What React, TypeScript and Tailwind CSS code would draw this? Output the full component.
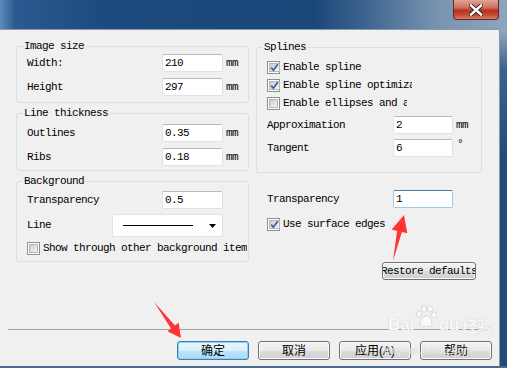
import React from 'react';

const mono = "font-['Liberation_Mono',monospace] text-[11px] tracking-[-0.6px] text-black whitespace-nowrap";
const cjk = "font-['Liberation_Sans','Noto_Sans_CJK_SC',sans-serif] text-[12px] text-black";

function Check({ on }: { on?: boolean }) {
  return (
    <span className="w-[13px] h-[13px] shrink-0 border border-[#8e8f8f] bg-white p-[1px] flex">
      <span className="flex-1 border border-[#b3b7bd] bg-[linear-gradient(135deg,#c9cdd3,#f4f4f4)] flex items-center justify-center">
        {on && (
          <svg width="9" height="9" viewBox="0 0 9 9">
            <path d="M1.2 4.6 L3.4 7.2 L7.8 1.3" fill="none" stroke="#3d5a9c" strokeWidth="1.7" />
          </svg>
        )}
      </span>
    </span>
  );
}

function Field({ value, focus, w }: { value: string; focus?: boolean; w: string }) {
  return (
    <div
      className={`${w} h-[18px] shrink-0 bg-white border rounded-[2px] pl-[2px] flex items-center ${mono} ${
        focus ? 'border-[#a4c9e3] border-t-[#3d7bad]' : 'border-[#dfe3e8] border-t-[#b8bcc2]'
      }`}
    >
      {value}
    </div>
  );
}

function Group({ title, className, children }: { title: string; className: string; children: React.ReactNode }) {
  return (
    <div className={`relative border border-[#d5dfe5] rounded-[3px] ${className}`}>
      <span className={`absolute -top-[7px] left-[6px] px-[1px] bg-[#f0f0f0] leading-[12px] ${mono}`}>{title}</span>
      {children}
    </div>
  );
}

function WinButton({ label, primary }: { label: string; primary?: boolean }) {
  return (
    <button
      className={`w-[72px] h-[19px] rounded-[3px] border flex items-center justify-center leading-none ${cjk} ${
        primary
          ? 'border-[#3c7fb1] bg-[linear-gradient(to_bottom,#eaf6fd_0%,#d9f0fc_50%,#bee6fd_50%,#a7d9f5_100%)] shadow-[inset_0_0_0_1px_#8fd0f3]'
          : 'border-[#707070] bg-[linear-gradient(to_bottom,#f2f2f2_0%,#ebebeb_50%,#dddddd_50%,#cfcfcf_100%)] shadow-[inset_0_0_0_1px_#fcfcfc]'
      }`}
    >
      {label}
    </button>
  );
}

export default function App() {
  return (
    <div className="w-[507px] h-[368px] relative overflow-hidden flex flex-col bg-[#f0f0f0]">
      {/* Title bar */}
      <div className="h-[29px] shrink-0 relative bg-[linear-gradient(to_right,#5d8cbc_0%,#2a5a8f_3%,#1c4b7f_20%,#1b4779_62%,#3d6490_72%,#7893b0_86%,#8ea4bc_100%)]">
        <div className="absolute top-0 left-[453px] w-[46px] h-[20px] rounded-b-[4px] border border-t-0 border-[#5a2a24] bg-[linear-gradient(to_bottom,#e3a393_0%,#d0705c_40%,#b8331f_55%,#c94a32_80%,#de8068_100%)] flex items-center justify-center">
          <svg width="14" height="12" viewBox="0 0 14 12">
            <path d="M2 1.5 L12 10.5 M12 1.5 L2 10.5" stroke="#3b2420" strokeWidth="4.4" strokeLinecap="square" />
            <path d="M2 1.5 L12 10.5 M12 1.5 L2 10.5" stroke="#ffffff" strokeWidth="2.4" strokeLinecap="square" />
          </svg>
        </div>
      </div>

      <div className="flex flex-1 min-h-0">
        {/* Client */}
        <div className="flex-1 flex flex-col border-t border-r border-[#8799ad]">
          <div className="flex pl-[16px] gap-[7px]">
            {/* Left column */}
            <div className="w-[233px] flex flex-col">
              <Group title="Image size" className="mt-[16px] pt-[7px] pb-[6px] pl-[10px]">
                <div className="flex items-center h-[18px]">
                  <span className={`w-[135px] ${mono}`}>Width:</span>
                  <Field value="210" w="w-[61px]" />
                  <span className={`ml-[3px] ${mono}`}>mm</span>
                </div>
                <div className="flex items-center h-[18px] mt-[6px]">
                  <span className={`w-[135px] ${mono}`}>Height</span>
                  <Field value="297" w="w-[61px]" />
                  <span className={`ml-[3px] ${mono}`}>mm</span>
                </div>
              </Group>

              <Group title="Line thickness" className="mt-[10px] pt-[10px] pb-[4px] pl-[10px]">
                <div className="flex items-center h-[18px]">
                  <span className={`w-[135px] ${mono}`}>Outlines</span>
                  <Field value="0.35" w="w-[61px]" />
                  <span className={`ml-[3px] ${mono}`}>mm</span>
                </div>
                <div className="flex items-center h-[18px] mt-[6px]">
                  <span className={`w-[135px] ${mono}`}>Ribs</span>
                  <Field value="0.18" w="w-[61px]" />
                  <span className={`ml-[3px] ${mono}`}>mm</span>
                </div>
              </Group>

              <Group title="Background" className="mt-[10px] pt-[9px] pb-[6px] pl-[10px]">
                <div className="flex items-center h-[18px]">
                  <span className={`w-[135px] ${mono}`}>Transparency</span>
                  <Field value="0.5" w="w-[61px]" />
                </div>
                <div className="flex items-center h-[23px] mt-[5px]">
                  <span className={`w-[85px] ${mono}`}>Line</span>
                  <div className="w-[111px] h-[23px] bg-white border border-[#dfe3e8] rounded-[2px] flex items-center pl-[10px]">
                    <span className="w-[70px] h-[1px] bg-black" />
                    <svg className="ml-[16px]" width="7" height="4" viewBox="0 0 7 4">
                      <path d="M0 0 H7 L3.5 4 Z" fill="#000" />
                    </svg>
                  </div>
                </div>
                <div className="flex items-center h-[13px] mt-[5px]">
                  <Check />
                  <span className={`ml-[3px] w-[204px] overflow-hidden ${mono}`}>Show through other background items</span>
                </div>
              </Group>
            </div>

            {/* Right column */}
            <div className="w-[226px] flex flex-col">
              <Group title="Splines" className="mt-[17px] pt-[13px] pb-[15px] pl-[10px]">
                <div className="flex items-center h-[13px]">
                  <Check on />
                  <span className={`ml-[3px] ${mono}`}>Enable spline</span>
                </div>
                <div className="flex items-center h-[13px] mt-[5px]">
                  <Check on />
                  <span className={`ml-[3px] w-[129px] overflow-hidden ${mono}`}>Enable spline optimization</span>
                </div>
                <div className="flex items-center h-[13px] mt-[5px]">
                  <Check />
                  <span className={`ml-[3px] w-[124px] overflow-hidden ${mono}`}>Enable ellipses and arcs</span>
                </div>
                <div className="flex items-center h-[18px] mt-[6px]">
                  <span className={`w-[126px] ${mono}`}>Approximation</span>
                  <Field value="2" w="w-[60px]" />
                  <span className={`ml-[3px] ${mono}`}>mm</span>
                </div>
                <div className="flex items-center h-[18px] mt-[5px]">
                  <span className={`w-[126px] ${mono}`}>Tangent</span>
                  <Field value="6" w="w-[60px]" />
                  <span className={`ml-[4px] self-start -mt-[3px] ${mono}`}>°</span>
                </div>
              </Group>

              <div className="flex items-center h-[18px] mt-[17px] pl-[11px]">
                <span className={`w-[126px] ${mono}`}>Transparency</span>
                <Field value="1" focus w="w-[60px]" />
              </div>
              <div className="flex items-center h-[13px] mt-[10px] pl-[11px]">
                <Check on />
                <span className={`ml-[3px] ${mono}`}>Use surface edges</span>
              </div>
              <button className="ml-[126px] mt-[31px] w-[94px] h-[18px] rounded-[3px] border border-[#707070] bg-[linear-gradient(to_bottom,#f2f2f2_0%,#ebebeb_50%,#dddddd_50%,#cfcfcf_100%)] shadow-[inset_0_0_0_1px_#fcfcfc] flex items-center justify-center overflow-hidden">
                <span className={`shrink-0 ${mono}`}>Restore defaults</span>
              </button>
            </div>
          </div>

          {/* Footer */}
          <div className="mt-auto pb-[6px]">
            <div className="ml-[8px] w-[481px] h-[1px] bg-[#a0a0a0]" />
            <div className="flex gap-[9px] pl-[177px] mt-[11px]">
              <WinButton label="确定" primary />
              <WinButton label="取消" />
              <WinButton label="应用(A)" />
              <WinButton label="帮助" />
            </div>
          </div>
        </div>

        {/* Right window frame */}
        <div className="w-[7px] shrink-0 bg-[linear-gradient(to_bottom,#93a8c0_0%,#3b6290_12%,#21497a_40%,#234c7a_100%)]" />
      </div>
      <div className="h-[2px] shrink-0 bg-[#4b6c92]" />

      {/* Watermark */}
      <div className="absolute left-[388px] top-[305px] pointer-events-none flex items-end gap-[1px] text-[#f9f9f9] [text-shadow:0_0_1px_#b8b8b8]">
        <span className="font-['Liberation_Sans',sans-serif] font-bold text-[17px] leading-none">Bai</span>
        <svg width="22" height="24" viewBox="0 0 22 24" className="mb-[4px]">
          <g fill="#f9f9f9" stroke="#c2c2c2" strokeWidth="0.6">
            <ellipse cx="4" cy="9" rx="2.5" ry="3.2" />
            <ellipse cx="9" cy="4" rx="2.5" ry="3.2" />
            <ellipse cx="15" cy="4" rx="2.5" ry="3.2" />
            <ellipse cx="19" cy="10" rx="2.5" ry="3.2" />
            <path d="M5 19 C6 13 9 11 11 11 C14 11 17 14 17 19 C17 22 13 22 11 21 C9 22 5 22 5 19 Z" />
          </g>
        </svg>
        <span className="font-['Liberation_Sans',sans-serif] font-bold text-[17px] leading-none">du</span>
        <span className="font-['Noto_Sans_CJK_SC',sans-serif] font-bold text-[15px] leading-none ml-[2px]">经验</span>
      </div>
      <div className="absolute left-[384px] top-[345px] pointer-events-none font-['Liberation_Sans',sans-serif] text-[11px] leading-none text-[#f7f7f7]/70 [text-shadow:0_0_1px_#c8c8c8]">
        jingyan.baidu.com
      </div>

      {/* Red annotation arrows */}
      <svg className="absolute inset-0 pointer-events-none" width="507" height="368" viewBox="0 0 507 368">
        <polygon points="154,302 175,325.5 178.6,322.8 181,338 167.4,331.2 171,328.5" fill="#ff3535" />
        <polygon points="393,261 397.1,230.9 391.7,229.6 404,215 407.3,233.2 401.9,231.9" fill="#ff3535" />
      </svg>
    </div>
  );
}
